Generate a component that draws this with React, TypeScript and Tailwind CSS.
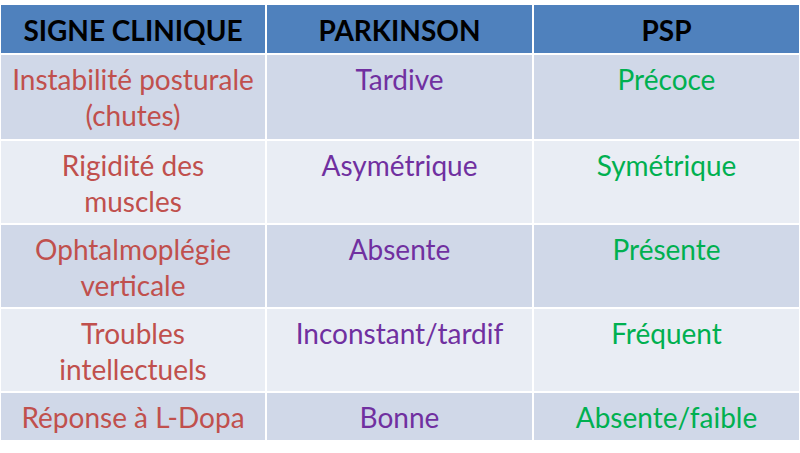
import React from "react";

const rows: { a: string[]; b: string; c: string; h: string; bg: string }[] = [
  { a: ["Instabilité posturale", "(chutes)"], b: "Tardive", c: "Précoce", h: "h-[84px]", bg: "bg-[#d0d8e8]" },
  { a: ["Rigidité des", "muscles"], b: "Asymétrique", c: "Symétrique", h: "h-[82px]", bg: "bg-[#e9edf4]" },
  { a: ["Ophtalmoplégie", "verticale"], b: "Absente", c: "Présente", h: "h-[82px]", bg: "bg-[#d0d8e8]" },
  { a: ["Troubles", "intellectuels"], b: "Inconstant/tardif", c: "Fréquent", h: "h-[82px]", bg: "bg-[#e9edf4]" },
  { a: ["Réponse à L-Dopa"], b: "Bonne", c: "Absente/faible", h: "h-[47px]", bg: "bg-[#d0d8e8]" },
];

export default function App() {
  return (
    <div className="w-[800px] h-[453px] bg-white pt-[5px] pl-[1px]" style={{ fontFamily: "Lato, 'Open Sans', sans-serif" }}>
      <div className="grid grid-cols-[264px_265px_265px] gap-[2px] bg-white">
        {["SIGNE CLINIQUE", "PARKINSON", "PSP"].map((t) => (
          <div key={t} className="h-[48px] bg-[#4f81bd] text-black font-bold text-[28px] leading-[36px] pt-[7px] text-center">
            {t}
          </div>
        ))}
        {rows.map((r, i) => (
          <React.Fragment key={i}>
            <div className={`${r.h} ${r.bg} text-[#c0504d] text-[28px] leading-[35.5px] pt-[7px] text-center`}>
              {r.a.map((l) => (
                <div key={l}>{l}</div>
              ))}
            </div>
            <div className={`${r.h} ${r.bg} text-[#7030a0] text-[28px] leading-[35.5px] pt-[7px] text-center`}>{r.b}</div>
            <div className={`${r.h} ${r.bg} text-[#00b050] text-[28px] leading-[35.5px] pt-[7px] text-center`}>{r.c}</div>
          </React.Fragment>
        ))}
      </div>
    </div>
  );
}
